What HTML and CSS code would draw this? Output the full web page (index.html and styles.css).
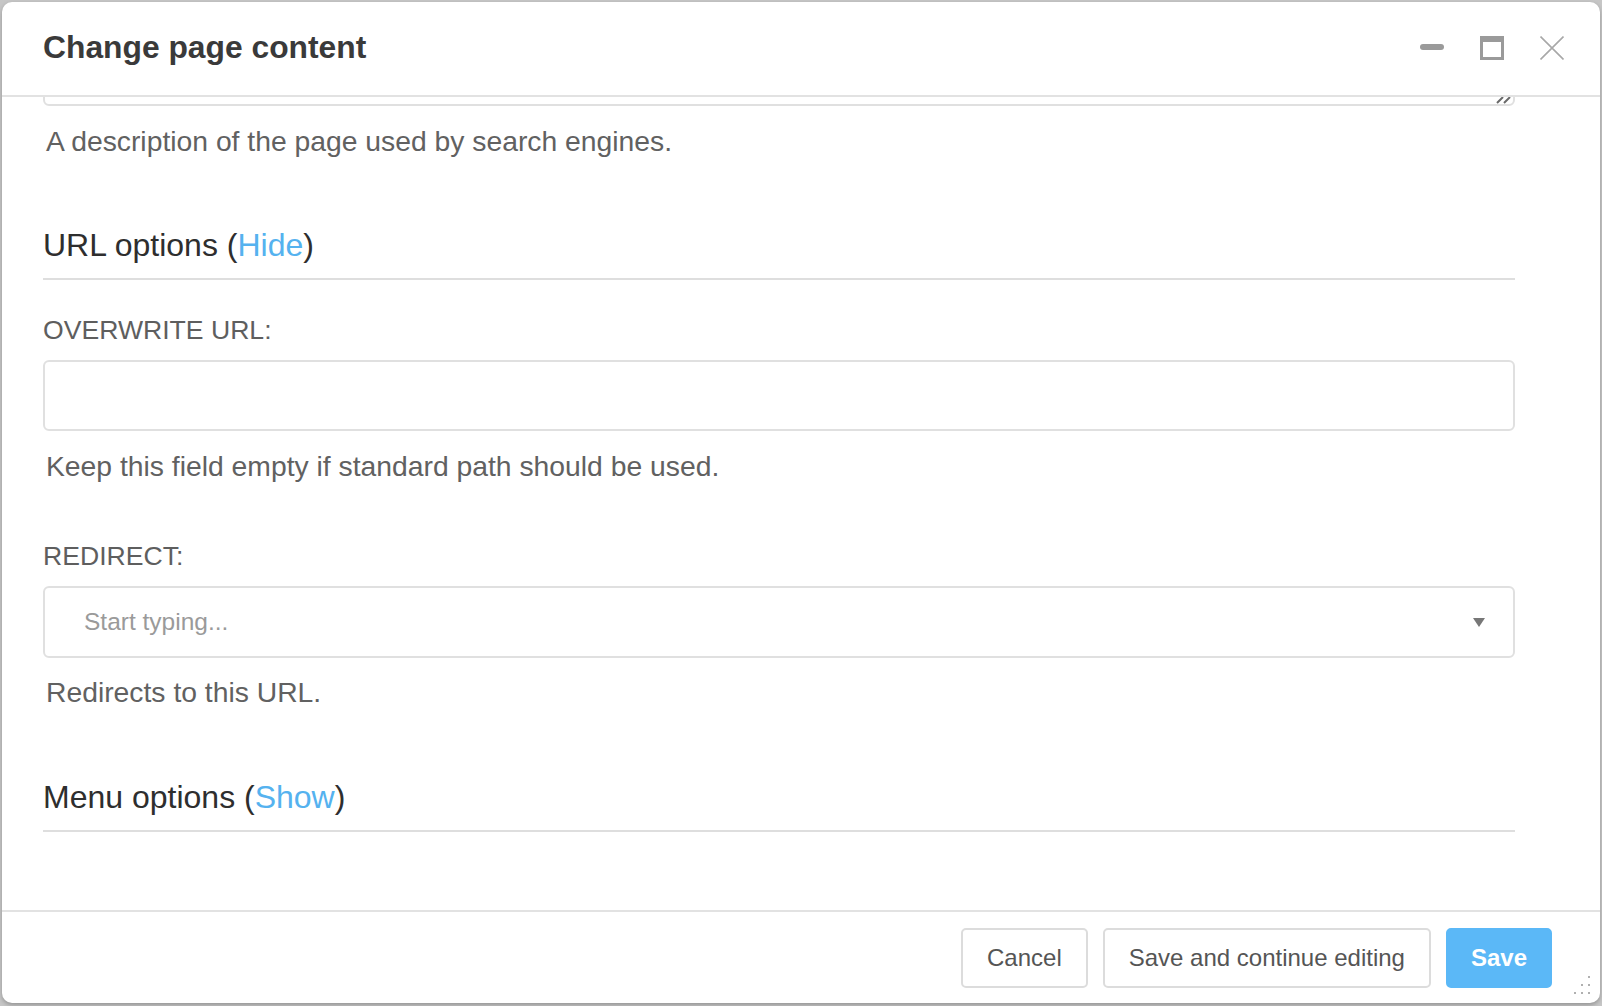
FILE: index.html
```html
<!DOCTYPE html>
<html lang="en">
<head>
<meta charset="utf-8">
<title>Change page content</title>
<link rel="stylesheet" href="styles.css">
</head>
<body>
<div class="dialog">
  <header class="dlg-header">
    <h1 class="dlg-title">Change page content</h1>
    <div class="dlg-controls">
      <span class="ctl ctl-min" aria-label="Minimize"></span>
      <span class="ctl ctl-max" aria-label="Maximize"></span>
      <svg class="ctl ctl-close" width="24" height="24" viewBox="0 0 24 24" aria-label="Close">
        <path d="M0.5 0.5 L23.5 23.5 M23.5 0.5 L0.5 23.5" stroke="#a8a8a8" stroke-width="1.6" fill="none"/>
      </svg>
    </div>
  </header>

  <main class="dlg-body">
    <div class="content">
      <div class="textarea-stub">
        <svg class="grip" width="16" height="9" viewBox="0 0 16 9">
          <path d="M1 8 L7 2 M8 8 L14 2" stroke="#6a6a6a" stroke-width="2" fill="none"/>
        </svg>
      </div>
      <p class="help help-first">A description of the page used by search engines.</p>

      <h2 class="section">URL options (<a href="#" class="toggle">Hide</a>)</h2>

      <label class="label label-first">OVERWRITE URL:</label>
      <div class="field"></div>
      <p class="help">Keep this field empty if standard path should be used.</p>

      <label class="label">REDIRECT:</label>
      <div class="field select">
        <span class="placeholder">Start typing...</span>
        <svg class="arrow" width="12" height="9" viewBox="0 0 12 9"><path d="M0 0 H12 L6 9 Z" fill="#777"/></svg>
      </div>
      <p class="help help-last">Redirects to this URL.</p>

      <h2 class="section section-menu">Menu options (<a href="#" class="toggle">Show</a>)</h2>
    </div>
  </main>

  <footer class="dlg-footer">
    <button class="btn">Cancel</button>
    <button class="btn">Save and continue editing</button>
    <button class="btn btn-primary">Save</button>
    <svg class="resize" width="20" height="20" viewBox="0 0 20 20">
      <g fill="#b0b0b0">
        <rect x="16" y="1" width="2" height="2"/>
        <rect x="9" y="9" width="2" height="2"/>
        <rect x="16" y="9" width="2" height="2"/>
        <rect x="2" y="17" width="2" height="2"/>
        <rect x="9" y="17" width="2" height="2"/>
        <rect x="16" y="17" width="2" height="2"/>
      </g>
    </svg>
  </footer>
</div>
</body>
</html>
```

FILE: styles.css
```css
html, body {
  margin: 0;
  padding: 0;
  height: 100%;
}

body {
  background: #c6c6c6;
  font-family: "Liberation Sans", Arial, Helvetica, sans-serif;
  overflow: hidden;
}

.dialog {
  position: relative;
  box-sizing: border-box;
  margin: 2px 2px 0 2px;
  height: 1001px;
  background: #fff;
  border-radius: 10px;
  box-shadow: 0 2px 4px rgba(0, 0, 0, 0.25);
  display: flex;
  flex-direction: column;
  overflow: hidden;
}

/* Header */
.dlg-header {
  flex: 0 0 auto;
  height: 95px;
  box-sizing: border-box;
  border-bottom: 2px solid #e2e2e2;
  display: flex;
  align-items: center;
  justify-content: space-between;
  padding: 0 36px 0 41px;
}

.dlg-title {
  margin: 0;
  font-size: 31.8px;
  line-height: 1;
  font-weight: bold;
  color: #3a3a3a;
  padding-bottom: 1px;
}

.dlg-controls {
  display: flex;
  align-items: center;
  gap: 36px;
  padding-bottom: 2px;
}

.ctl {
  display: block;
  width: 24px;
  height: 24px;
  box-sizing: border-box;
}

.ctl-min {
  position: relative;
}
.ctl-min::before {
  content: "";
  position: absolute;
  left: 0;
  right: 0;
  top: 8px;
  height: 6px;
  border-radius: 3px;
  background: #9a9a9a;
}

.ctl-max {
  border: 3px solid #9a9a9a;
  border-top-width: 6px;
}

/* Body */
.dlg-body {
  flex: 1 1 auto;
  overflow: hidden;
  padding: 0 85px 0 41px;
}

.content {
  display: flex;
  flex-direction: column;
}

.textarea-stub {
  position: relative;
  height: 100px;
  margin-top: -91px;
  border: 2px solid #e0e0e0;
  border-radius: 6px;
  box-sizing: border-box;
}

.grip {
  position: absolute;
  right: 1px;
  bottom: 0;
}

.help {
  margin: 15px 0 0 0;
  padding-left: 3px;
  font-size: 28.3px;
  line-height: 40px;
  color: #616161;
}

.help-last {
  margin-top: 14px;
}

.section {
  margin: 64px 0 0 0;
  font-size: 32px;
  line-height: 40px;
  font-weight: normal;
  color: #2e2e2e;
  padding-bottom: 13px;
  border-bottom: 2px solid #dedede;
}

.section-menu {
  margin-top: 65px;
}

.toggle {
  color: #55b2ef;
  text-decoration: none;
}

.label {
  display: block;
  margin-top: 52px;
  font-size: 26.6px;
  line-height: 36px;
  color: #5e5e5e;
}

.label-first {
  margin-top: 32px;
}

.field {
  margin-top: 12px;
  height: 71px;
  box-sizing: border-box;
  border: 2px solid #e0e0e0;
  border-radius: 6px;
  background: #fff;
}

.select {
  height: 72px;
  display: flex;
  align-items: center;
  justify-content: space-between;
  padding: 0 28px 0 39px;
}

.placeholder {
  font-size: 24.5px;
  color: #9a9a9a;
}

.arrow {
  display: block;
  margin-top: 1px;
}

/* Footer */
.dlg-footer {
  flex: 0 0 auto;
  height: 93px;
  box-sizing: border-box;
  border-top: 2px solid #e2e2e2;
  display: flex;
  justify-content: flex-end;
  align-items: flex-start;
  gap: 15px;
  padding: 16px 48px 0 0;
}

.btn {
  height: 60px;
  box-sizing: border-box;
  padding: 0 24px;
  border: 2px solid #dcdcdc;
  border-radius: 5px;
  background: #fff;
  font-family: "Liberation Sans", Arial, Helvetica, sans-serif;
  font-size: 24px;
  color: #555;
  cursor: pointer;
}

.btn-primary {
  background: #5bb8f7;
  border-color: #5bb8f7;
  color: #fff;
  font-weight: bold;
  padding: 0 23px;
}

.resize {
  position: absolute;
  right: 8px;
  bottom: 8px;
}
```
